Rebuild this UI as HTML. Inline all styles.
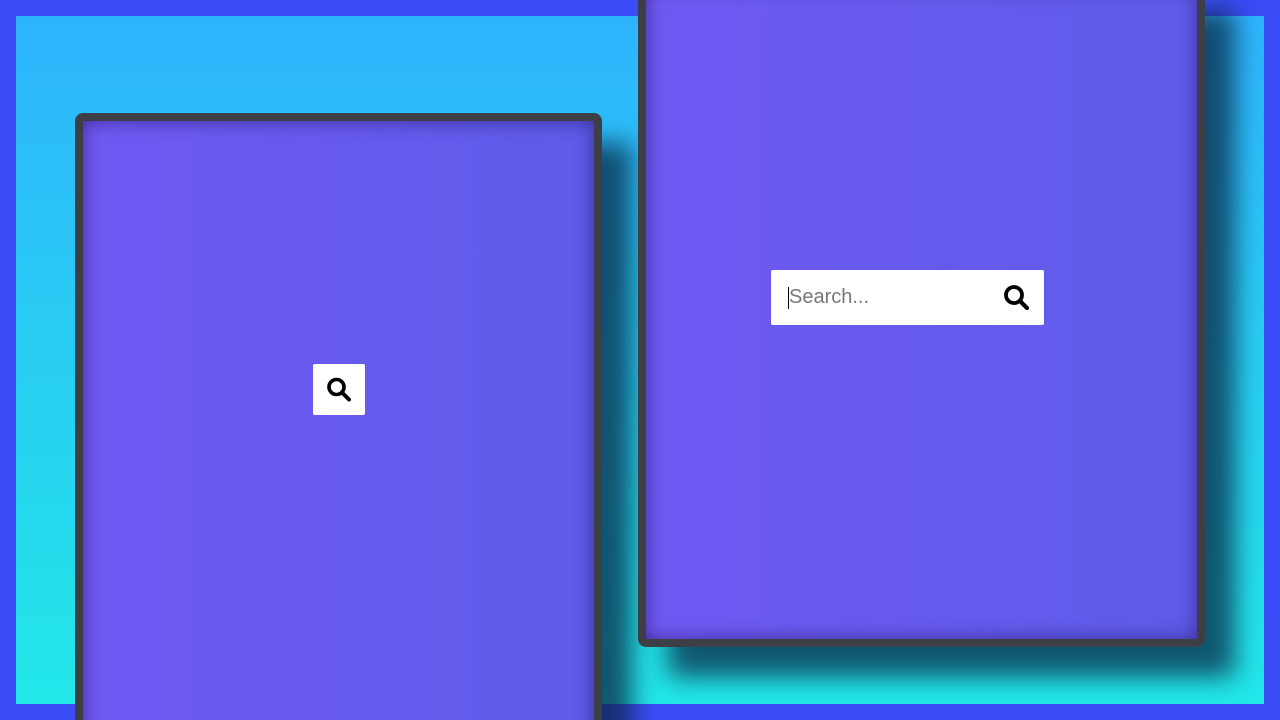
<!DOCTYPE html>
<html><head><style>
html,body{margin:0;padding:0;width:1280px;height:720px;overflow:hidden;background:#3a4cf5;font-family:"Liberation Sans",sans-serif}
.wrap{position:relative;width:1280px;height:720px;overflow:hidden}
.bg{position:absolute;left:16px;top:16px;width:1248px;height:688px;background:linear-gradient(#2eb4fd,#22e7e8)}
.card{position:absolute;box-sizing:border-box;border:8px solid #3d3e46;border-radius:8px;background:linear-gradient(90deg,#6f5af3,#5f5be8);box-shadow:inset 0 0 18px rgba(20,10,80,.55),30px 30px 25px rgba(10,40,70,.75)}
.search{position:absolute;background:#fff;border-radius:2px}
</style></head><body>
<div class="wrap">
<div class="bg"></div>
<div class="card" style="left:75px;top:113px;width:527px;height:640px"></div>
<div class="card" style="left:638px;top:-20px;width:567px;height:667px"></div>
<div class="search" style="left:313px;top:364px;width:52px;height:51px">
<svg width="52" height="51" viewBox="0 0 52 51"><circle cx="23.5" cy="23" r="7.5" fill="none" stroke="#000" stroke-width="3.6"/><line x1="29" y1="28.5" x2="36" y2="35.5" stroke="#000" stroke-width="4" stroke-linecap="round"/></svg></div>
<div class="search" style="left:771px;top:270px;width:273px;height:55px">
<div style="position:absolute;left:17px;top:17px;width:1px;height:22px;background:#000"></div>
<div style="position:absolute;left:18px;top:16px;font-size:20px;color:#777">Search...</div>
<svg style="position:absolute;left:230px;top:12px" width="32" height="32" viewBox="0 0 32 32"><circle cx="13" cy="13" r="8" fill="none" stroke="#000" stroke-width="3.8"/><line x1="19" y1="19" x2="26" y2="26" stroke="#000" stroke-width="4.2" stroke-linecap="round"/></svg>
</div>
</div>
</body></html>
